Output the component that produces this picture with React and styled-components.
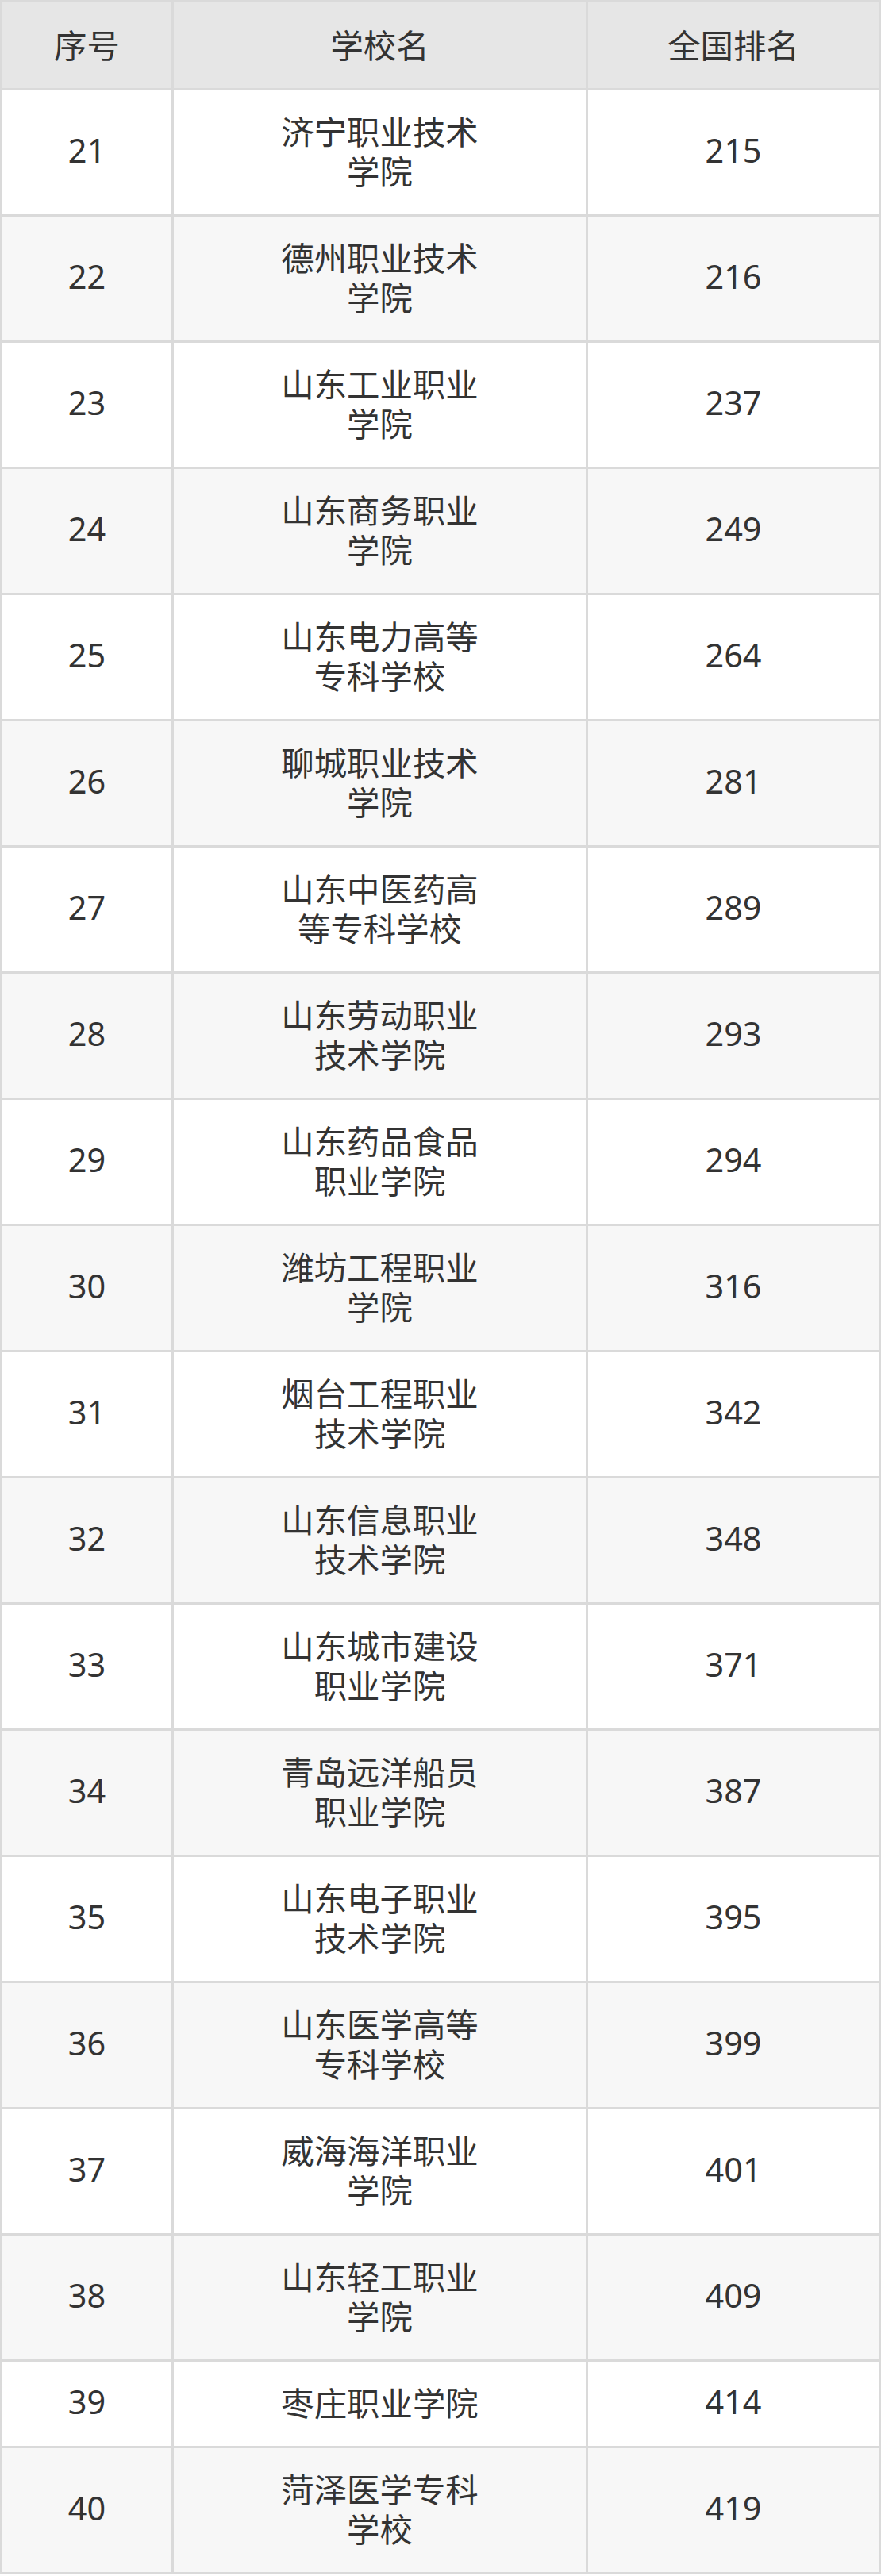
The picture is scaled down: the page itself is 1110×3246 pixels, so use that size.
import styled, { createGlobalStyle } from 'styled-components'

const GlobalStyle = createGlobalStyle`
  html, body {
    margin: 0;
    padding: 0;
    background: #ffffff;
  }
  body {
    font-family: "Noto Sans", "Noto Sans CJK SC", sans-serif;
    color: #333333;
  }
`

const rows = [
  ['21', '济宁职业技术学院', '215'],
  ['22', '德州职业技术学院', '216'],
  ['23', '山东工业职业学院', '237'],
  ['24', '山东商务职业学院', '249'],
  ['25', '山东电力高等专科学校', '264'],
  ['26', '聊城职业技术学院', '281'],
  ['27', '山东中医药高等专科学校', '289'],
  ['28', '山东劳动职业技术学院', '293'],
  ['29', '山东药品食品职业学院', '294'],
  ['30', '潍坊工程职业学院', '316'],
  ['31', '烟台工程职业技术学院', '342'],
  ['32', '山东信息职业技术学院', '348'],
  ['33', '山东城市建设职业学院', '371'],
  ['34', '青岛远洋船员职业学院', '387'],
  ['35', '山东电子职业技术学院', '395'],
  ['36', '山东医学高等专科学校', '399'],
  ['37', '威海海洋职业学院', '401'],
  ['38', '山东轻工职业学院', '409'],
  ['39', '枣庄职业学院', '414'],
  ['40', '菏泽医学专科学校', '419'],
]

const Table = styled.div`
  width: 1110px;
  box-sizing: border-box;
  display: flex;
  flex-direction: column;
  gap: 3px;
  padding: 3px;
  background: #dadada;
`

const Row = styled.div`
  display: grid;
  grid-template-columns: 213px 519px 1fr;
  gap: 3px;
  background: #dadada;
`

const Cell = styled.div`
  display: flex;
  align-items: center;
  justify-content: center;
  text-align: center;
  padding: ${props => (props.head ? '27px 0 31px' : '25px 0 31px')};
  font-size: 41.4px;
  line-height: 50px;
  color: #333333;
  background: ${props =>
    props.head ? '#e6e6e6' : props.alt ? '#f7f7f7' : '#ffffff'};
`

const Name = styled.span`
  display: inline-block;
  max-width: 262px;
  font-family: "Noto Sans CJK SC", "Noto Sans", sans-serif;
`

const HeadText = styled.span`
  font-family: "Noto Sans CJK SC", "Noto Sans", sans-serif;
`

export default function App() {
  return (
    <>
      <GlobalStyle />
      <Table>
        <Row>
          <Cell head>
            <HeadText>序号</HeadText>
          </Cell>
          <Cell head>
            <HeadText>学校名</HeadText>
          </Cell>
          <Cell head>
            <HeadText>全国排名</HeadText>
          </Cell>
        </Row>
        {rows.map((r, idx) => (
          <Row key={r[0]}>
            <Cell alt={idx % 2 === 1}>{r[0]}</Cell>
            <Cell alt={idx % 2 === 1}>
              <Name>{r[1]}</Name>
            </Cell>
            <Cell alt={idx % 2 === 1}>{r[2]}</Cell>
          </Row>
        ))}
      </Table>
    </>
  )
}
